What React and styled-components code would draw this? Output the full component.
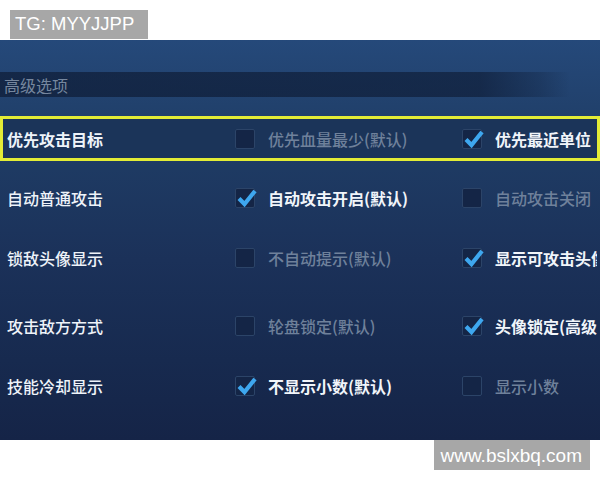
import React from "react";
import styled, { createGlobalStyle } from "styled-components";

const GlobalStyle = createGlobalStyle`
  html, body {
    margin: 0;
    padding: 0;
    background: #ffffff;
    overflow: hidden;
  }
  body {
    font-family: "Noto Sans CJK SC", "Noto Sans", sans-serif;
  }
`;

const Page = styled.div`
  width: 600px;
  height: 480px;
  display: flex;
  flex-direction: column;
  background: #ffffff;
`;

const TopBar = styled.div`
  height: 40px;
  padding: 10px 0 0 10px;
  box-sizing: border-box;
`;

const Tag = styled.div`
  display: inline-flex;
  align-items: center;
  height: ${(p) => p.$h || 29}px;
  padding: ${(p) => p.$pad || "0 6px"};
  background: #a7a7a7;
  color: #ffffff;
  font-family: "Liberation Sans", Arial, sans-serif;
  font-size: ${(p) => p.$size || 18}px;
  line-height: 1;
  white-space: nowrap;
`;

const Panel = styled.div`
  height: 400px;
  overflow: hidden;
  display: flex;
  flex-direction: column;
  padding-top: 32px;
  box-sizing: border-box;
  background: linear-gradient(
    180deg,
    #25497a 0%,
    #1f3d66 25%,
    #1b3159 55%,
    #172a4f 80%,
    #152447 100%
  );
`;

const SectionHeader = styled.div`
  height: 25px;
  display: flex;
  align-items: center;
  padding-left: 4px;
  color: #76879f;
  font-size: 16px;
  background: linear-gradient(
    90deg,
    rgba(12, 24, 48, 0.65) 0%,
    rgba(12, 24, 48, 0.6) 80%,
    rgba(12, 24, 48, 0.25) 90%,
    rgba(12, 24, 48, 0) 95%
  );
`;

const Row = styled.div`
  display: grid;
  grid-template-columns: 228px 227px 1fr;
  align-items: center;
  height: ${(p) => (p.$highlight ? 45 : 60)}px;
  margin-top: ${(p) => p.$gap || 0}px;
  padding-left: 4px;
  box-sizing: border-box;
  border: 3px solid ${(p) => (p.$highlight ? "#e3ec36" : "transparent")};
  background: ${(p) => (p.$highlight ? "#1b3459" : "transparent")};
  white-space: nowrap;
`;

const Label = styled.span`
  color: #eef3f9;
  font-size: 16px;
  font-weight: ${(p) => (p.$bold ? 700 : 500)};
`;

const Option = styled.div`
  display: flex;
  align-items: center;
  gap: 13px;
  overflow: hidden;
`;

const Box = styled.span`
  flex: none;
  width: 20px;
  height: 20px;
  box-sizing: border-box;
  position: relative;
  background: #142546;
  border: 1px solid #2c4468;
  border-radius: 2px;

  svg {
    position: absolute;
    left: 0;
    top: -1px;
    overflow: visible;
  }
`;

const OptionText = styled.span`
  font-size: 16px;
  font-weight: ${(p) => (p.$on ? 700 : 500)};
  color: ${(p) => (p.$on ? "#f1f5fa" : "#6f819b")};
`;

const Footer = styled.div`
  flex: 1;
  display: flex;
  justify-content: flex-end;
  align-items: flex-start;
  padding-right: 10px;
`;

const Check = () => (
  <svg width="20" height="20" viewBox="0 0 20 20">
    <path
      d="M3 10.5 L8.5 16 L19 3"
      fill="none"
      stroke="#3ea7ef"
      strokeWidth="4.2"
      strokeLinejoin="miter"
      strokeLinecap="butt"
    />
  </svg>
);

const CheckOption = ({ on, text }) => (
  <Option>
    <Box>{on && <Check />}</Box>
    <OptionText $on={on}>{text}</OptionText>
  </Option>
);

const rows = [
  { label: "优先攻击目标", a: "优先血量最少(默认)", b: "优先最近单位", pick: 1, highlight: true, gap: 19 },
  { label: "自动普通攻击", a: "自动攻击开启(默认)", b: "自动攻击关闭", pick: 0, gap: 7 },
  { label: "锁敌头像显示", a: "不自动提示(默认)", b: "显示可攻击头像", pick: 1 },
  { label: "攻击敌方方式", a: "轮盘锁定(默认)", b: "头像锁定(高级)", pick: 1, gap: 8 },
  { label: "技能冷却显示", a: "不显示小数(默认)", b: "显示小数", pick: 0 },
];

const App = () => {
  return (
    <Page>
      <GlobalStyle />
      <TopBar>
        <Tag $size={18.5} $pad="0 14px 0 5px">TG: MYYJJPP</Tag>
      </TopBar>
      <Panel>
        <SectionHeader>高级选项</SectionHeader>
        {rows.map((r) => (
          <Row key={r.label} $highlight={r.highlight} $gap={r.gap}>
            <Label $bold={r.highlight}>{r.label}</Label>
            <CheckOption on={r.pick === 0} text={r.a} />
            <CheckOption on={r.pick === 1} text={r.b} />
          </Row>
        ))}
      </Panel>
      <Footer>
        <Tag $size={19} $h={30} $pad="0 8px 0 7px">www.bslxbq.com</Tag>
      </Footer>
    </Page>
  );
};

export default App;
